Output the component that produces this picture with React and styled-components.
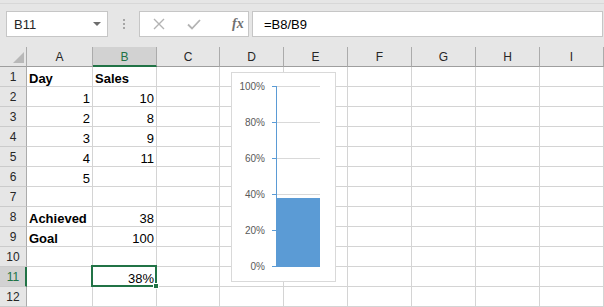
import styled, { createGlobalStyle } from "styled-components";

const GlobalStyle = createGlobalStyle`
  html, body {
    margin: 0;
    padding: 0;
    background: #ffffff;
  }
  body {
    font-family: "Liberation Sans", Arial, sans-serif;
    overflow: hidden;
  }
`;

const COLUMNS = ["A", "B", "C", "D", "E", "F", "G", "H", "I"];
const ROWS = [
  ["Day", "Sales"],
  [1, 10],
  [2, 8],
  [3, 9],
  [4, 11],
  [5, ""],
  ["", ""],
  ["Achieved", 38],
  ["Goal", 100],
  ["", ""],
  ["", "38%"],
  ["", ""],
];
const TICKS = [100, 80, 60, 40, 20, 0];

export default function App() {
  return (
    <Page>
      <GlobalStyle />
      <Toolbar>
        <NameBox>
          <span>B11</span>
          <DropArrow />
        </NameBox>
        <Grip>
          <i />
          <i />
          <i />
        </Grip>
        <FxBox>
          <svg width="12" height="12" viewBox="0 0 12 12">
            <path d="M1 1 L11 11 M11 1 L1 11" stroke="#b3b3b3" strokeWidth="1.4" fill="none" />
          </svg>
          <svg width="14" height="11" viewBox="0 0 14 11">
            <path d="M1 5.5 L5 9.5 L13 1" stroke="#b3b3b3" strokeWidth="1.8" fill="none" />
          </svg>
          <FxText>fx</FxText>
        </FxBox>
        <FormulaInput>=B8/B9</FormulaInput>
      </Toolbar>

      <Sheet>
        <Corner />
        {COLUMNS.map((c) => (
          <ColHeader key={c} $active={c === "B"}>
            {c}
          </ColHeader>
        ))}
        {ROWS.map((row, r) => [
          <RowHeader key={"h" + r} $active={r === 10}>
            {r + 1}
          </RowHeader>,
          ...COLUMNS.map((c, ci) => {
            const v = ci < 2 ? row[ci] : "";
            const isText = typeof v === "string" && v !== "" && !v.endsWith("%");
            return (
              <Cell key={c + r} $bold={isText} $left={isText}>
                {v}
              </Cell>
            );
          }),
        ])}

        <Selection>
          <FillHandle />
        </Selection>

        <ChartFrame>
          <svg width="103" height="208" viewBox="0 0 103 208">
            {TICKS.map((t, i) => {
              const y = 13 + i * 36;
              return (
                <g key={t}>
                  <line x1="45" x2="88" y1={y + 0.5} y2={y + 0.5} stroke="#d9d9d9" />
                  <line x1="40" x2="45" y1={y + 0.5} y2={y + 0.5} stroke="#5b9bd5" />
                  <text
                    x="33"
                    y={y + 4}
                    textAnchor="end"
                    fontFamily="Liberation Sans, Arial, sans-serif"
                    fontSize="10"
                    fill="#595959"
                  >
                    {t}%
                  </text>
                </g>
              );
            })}
            <rect x="44" y="125" width="44" height="69" fill="#5b9bd5" />
            <line x1="44.5" x2="44.5" y1="13" y2="194" stroke="#5b9bd5" />
          </svg>
        </ChartFrame>
      </Sheet>
    </Page>
  );
}

const Page = styled.div`
  width: 604px;
  height: 307px;
  overflow: hidden;
  background: #ffffff;
`;

const Toolbar = styled.div`
  height: 47px;
  box-sizing: border-box;
  padding-top: 11px;
  display: flex;
  align-items: flex-start;
  background: linear-gradient(#e6e6e6 3px, #d8d8d8 3px, #d8d8d8 4px, #e6e6e6 4px);
`;

const NameBox = styled.div`
  margin-left: 6px;
  width: 102px;
  height: 26px;
  box-sizing: border-box;
  border: 1px solid #c6c6c6;
  background: #ffffff;
  display: flex;
  align-items: center;
  justify-content: space-between;
  padding: 0 6px 0 7px;
  font-size: 13px;
  color: #262626;
`;

const DropArrow = styled.div`
  width: 0;
  height: 0;
  border-left: 4px solid transparent;
  border-right: 4px solid transparent;
  border-top: 4px solid #6d6d6d;
`;

const Grip = styled.div`
  width: 31px;
  height: 26px;
  display: flex;
  flex-direction: column;
  align-items: center;
  justify-content: center;
  gap: 2px;

  i {
    width: 2px;
    height: 2px;
    background: #a6a6a6;
  }
`;

const FxBox = styled.div`
  width: 110px;
  height: 26px;
  box-sizing: border-box;
  border: 1px solid #c6c6c6;
  background: #ffffff;
  display: flex;
  align-items: center;
  padding-left: 13px;
  gap: 22px;
`;

const FxText = styled.span`
  font-family: "Liberation Serif", "Times New Roman", serif;
  font-style: italic;
  font-weight: bold;
  font-size: 14px;
  color: #707070;
  margin-left: 9px;
`;

const FormulaInput = styled.div`
  margin-left: 3px;
  margin-right: 1px;
  flex: 1;
  height: 26px;
  box-sizing: border-box;
  border: 1px solid #c6c6c6;
  background: #ffffff;
  display: flex;
  align-items: center;
  padding-left: 11px;
  font-size: 13px;
  color: #000000;
`;

const Sheet = styled.div`
  position: relative;
  display: grid;
  grid-template-columns: 27px 66px 64px 63px 64px 64px 64px 64px 64px 1fr;
  grid-auto-rows: 20px;
`;

const Corner = styled.div`
  position: relative;
  background: #e6e6e6;
  border-right: 1px solid #ababab;
  border-bottom: 1px solid #9e9e9e;

  &::after {
    content: "";
    position: absolute;
    right: 2px;
    bottom: 3px;
    width: 11px;
    height: 11px;
    background: #b8b8b8;
    clip-path: polygon(100% 0, 100% 100%, 0 100%);
  }
`;

const ColHeader = styled.div`
  box-sizing: border-box;
  background: ${(p) => (p.$active ? "#d2d2d2" : "#e6e6e6")};
  border-right: 1px solid #ababab;
  border-bottom: ${(p) => (p.$active ? "2px solid #217346" : "1px solid #9e9e9e")};
  color: ${(p) => (p.$active ? "#217346" : "#262626")};
  font-size: 12px;
  display: flex;
  align-items: center;
  justify-content: center;
  padding-top: ${(p) => (p.$active ? "1px" : "0")};
`;

const RowHeader = styled.div`
  box-sizing: border-box;
  background: ${(p) => (p.$active ? "#d2d2d2" : "#e6e6e6")};
  border-right: ${(p) => (p.$active ? "2px solid #217346" : "1px solid #ababab")};
  border-bottom: 1px solid #cbcbcb;
  color: ${(p) => (p.$active ? "#217346" : "#262626")};
  font-size: 12px;
  display: flex;
  align-items: center;
  justify-content: center;
  padding-left: ${(p) => (p.$active ? "1px" : "0")};
`;

const Cell = styled.div`
  box-sizing: border-box;
  border-right: 1px solid #d4d4d4;
  border-bottom: 1px solid #d4d4d4;
  padding: 3px 2px 0 2px;
  font-size: 13px;
  line-height: 17px;
  font-weight: ${(p) => (p.$bold ? "bold" : "normal")};
  text-align: ${(p) => (p.$left ? "left" : "right")};
  color: #000000;
  white-space: nowrap;
  overflow: hidden;
`;

const Selection = styled.div`
  position: absolute;
  left: 91px;
  top: 218px;
  width: 66px;
  height: 22px;
  box-sizing: border-box;
  border: 2px solid #217346;
  pointer-events: none;
`;

const FillHandle = styled.div`
  position: absolute;
  right: -4px;
  bottom: -4px;
  width: 6px;
  height: 6px;
  box-sizing: border-box;
  background: #217346;
  border: 1px solid #ffffff;
`;

const ChartFrame = styled.div`
  position: absolute;
  left: 231px;
  top: 25px;
  width: 105px;
  height: 210px;
  box-sizing: border-box;
  border: 1px solid #d9d9d9;
  background: #ffffff;

  svg {
    display: block;
  }
`;
